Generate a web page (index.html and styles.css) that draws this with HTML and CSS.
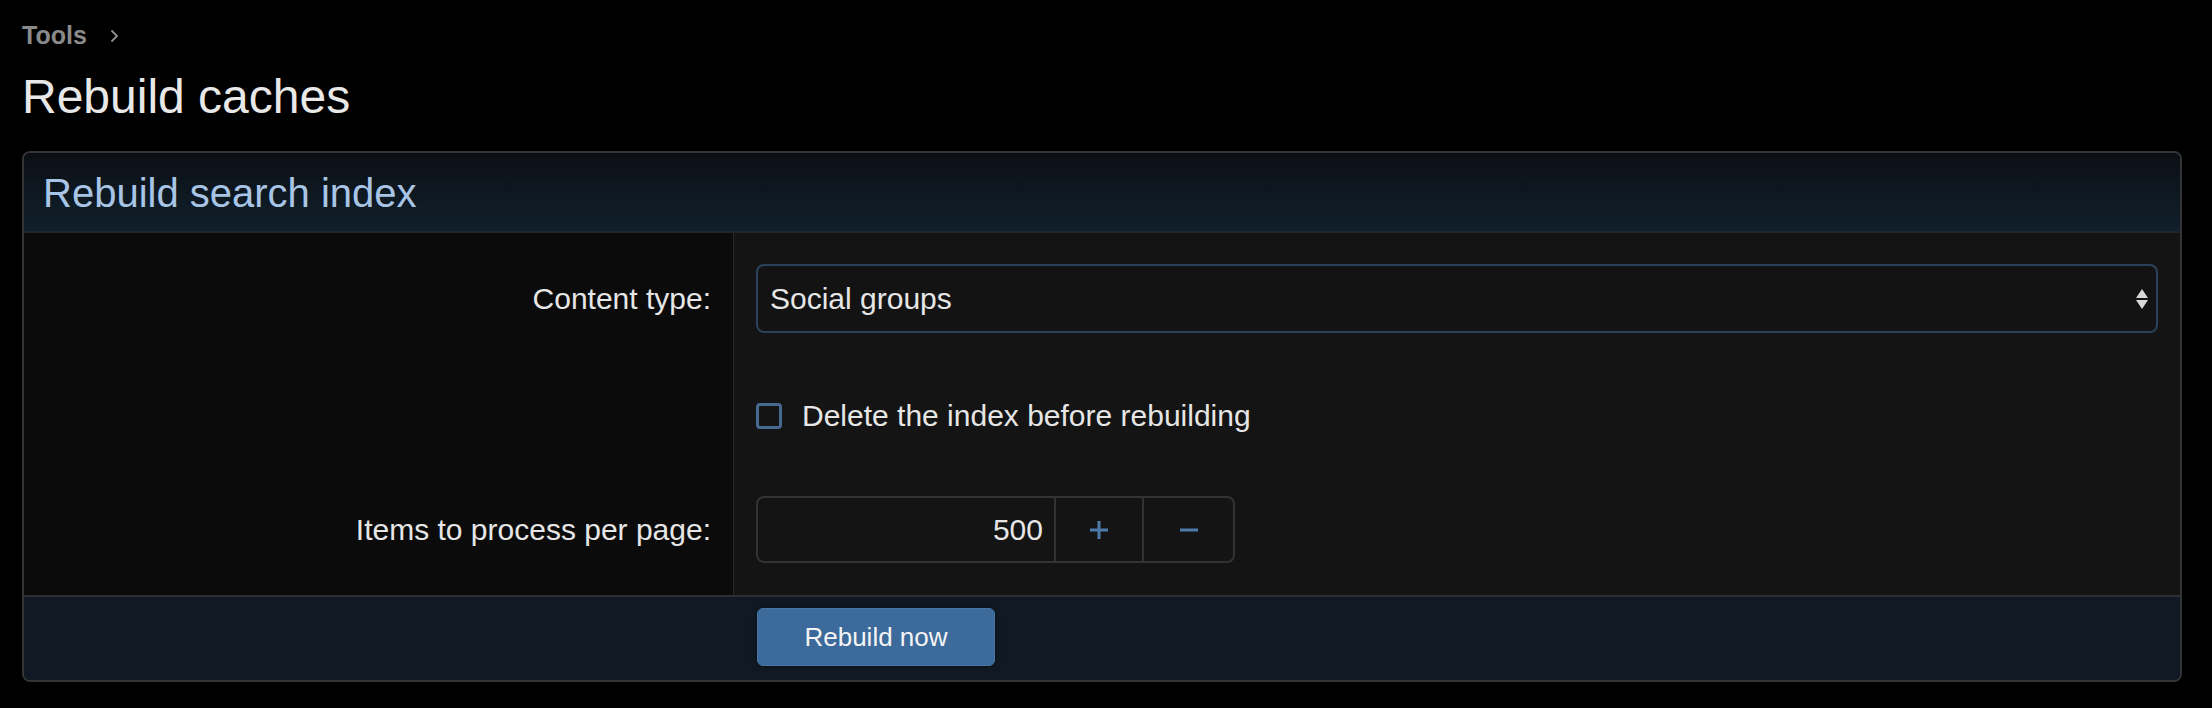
FILE: index.html
```html
<!DOCTYPE html>
<html>
  <head>
  <link rel="stylesheet" href="styles.css">
  </head>
  <body class="page">
    <div class="crumbs">
      <span class="crumb">Tools</span>
      <svg class="chevron" width="10" height="14" viewBox="0 0 10 14"><path d="M2.5 1.5 L8 7 L2.5 12.5" fill="none" stroke="#8f8f8f" stroke-width="1.8"/></svg>
    </div>
    <h1 class="title">Rebuild caches</h1>

    <div class="block">
      <h2 class="block-header">Rebuild search index</h2>
      <div class="block-body">
        <div class="row row-first">
          <div class="row-label"><span>Content type:</span></div>
          <div class="row-input">
            <div class="select">
              <span>Social groups</span>
              <svg width="14" height="22" viewBox="0 0 14 22"><path d="M7 1 L13 10 H1 Z M1 12 H13 L7 21 Z" fill="#d8d8d8"/></svg>
            </div>
          </div>
        </div>
        <div class="row row-check">
          <div class="row-label"></div>
          <div class="row-input">
            <label class="check"><span class="check-box"></span>Delete the index before rebuilding</label>
          </div>
        </div>
        <div class="row row-last">
          <div class="row-label"><span>Items to process per page:</span></div>
          <div class="row-input">
            <div class="number">
              <div class="number-field">500</div>
              <div class="number-btn btn-up">
                <svg width="22" height="22" viewBox="0 0 22 22"><path d="M11 2 V20 M2 11 H20" stroke="#4d7aab" stroke-width="3"/></svg>
              </div>
              <div class="number-btn btn-down">
                <svg width="22" height="22" viewBox="0 0 22 22"><path d="M2 11 H20" stroke="#4d7aab" stroke-width="3"/></svg>
              </div>
            </div>
          </div>
        </div>
      </div>
      <div class="block-footer">
        <div class="footer-spacer"></div>
        <div class="footer-controls"><button class="button">Rebuild now</button></div>
      </div>
    </div>
  </body>
</html>
```

FILE: styles.css
```css
    .page {
      margin: 0;
      padding: 20px 30px 0 22px;
      background: #000;
      color: #e6e6e6;
      font-family: "Liberation Sans", Arial, sans-serif;
    }
    .crumbs {
      display: flex;
      align-items: center;
      gap: 22px;
      height: 30px;
    }
    .crumb {
      font-size: 25px;
      font-weight: bold;
      line-height: 30px;
      color: #8a8a8a;
    }
    .chevron {
      margin-top: 2px;
    }
    .title {
      margin: 18px 0 26px 0;
      font-size: 48px;
      font-weight: normal;
      line-height: 57px;
      color: #e8e8e8;
    }
    .block {
      border: 2px solid #343436;
      border-radius: 8px;
      overflow: hidden;
    }
    .block-header {
      margin: 0;
      padding: 16px 18px 14px 19px;
      font-size: 40px;
      font-weight: normal;
      line-height: 48px;
      color: #a9c5e6;
      background: linear-gradient(to bottom, #0b0f14, #10202c);
      border-bottom: 2px solid #1f262c;
    }
    .row {
      display: grid;
      grid-template-columns: 710px 1fr;
    }
    .row-label {
      background: #0b0b0b;
      border-right: 1px solid #262626;
      text-align: right;
      padding-right: 22px;
      font-size: 30px;
    }
    .row-input {
      background: #141414;
      padding-left: 22px;
      padding-right: 22px;
      font-size: 30px;
    }
    .row-first .row-label, .row-first .row-input {
      padding-top: 31px;
      padding-bottom: 20px;
      line-height: 69px;
    }
    .row-check .row-label, .row-check .row-input {
      padding-top: 40px;
      padding-bottom: 19px;
      line-height: 45px;
    }
    .row-last .row-label, .row-last .row-input {
      padding-top: 39px;
      padding-bottom: 32px;
      line-height: 67px;
    }
    .select {
      display: flex;
      align-items: center;
      justify-content: space-between;
      box-sizing: border-box;
      height: 69px;
      padding: 0 7px 0 12px;
      border: 2px solid #29415a;
      border-radius: 8px;
      background: #131313;
      color: #e6e6e6;
      line-height: 1;
    }
    .check {
      display: flex;
      align-items: center;
      gap: 20px;
      color: #e6e6e6;
    }
    .check-box {
      box-sizing: border-box;
      width: 26px;
      height: 26px;
      border: 3px solid #46698f;
      border-radius: 4px;
    }
    .number {
      display: flex;
      box-sizing: border-box;
      width: 479px;
      height: 67px;
      border: 2px solid #333;
      border-radius: 8px;
      line-height: 1;
    }
    .number-field {
      flex: 1;
      display: flex;
      align-items: center;
      justify-content: flex-end;
      padding-right: 11px;
      color: #e6e6e6;
    }
    .number-btn {
      display: flex;
      align-items: center;
      justify-content: center;
      border-left: 2px solid #333;
    }
    .btn-up {
      width: 86px;
    }
    .btn-down {
      width: 89px;
    }
    .block-footer {
      display: grid;
      grid-template-columns: 711px 1fr;
      background: #111a24;
      border-top: 2px solid #2e2e30;
      padding: 11px 0 14px 0;
    }
    .footer-controls {
      padding-left: 22px;
    }
    .button {
      width: 238px;
      height: 58px;
      border: 1px solid #4676a6;
      border-radius: 6px;
      background: #3c6a9a;
      color: #f4f4f4;
      font-family: "Liberation Sans", Arial, sans-serif;
      font-size: 26px;
      box-shadow: 0 0 6px rgba(0, 0, 0, 0.5);
    }
```
